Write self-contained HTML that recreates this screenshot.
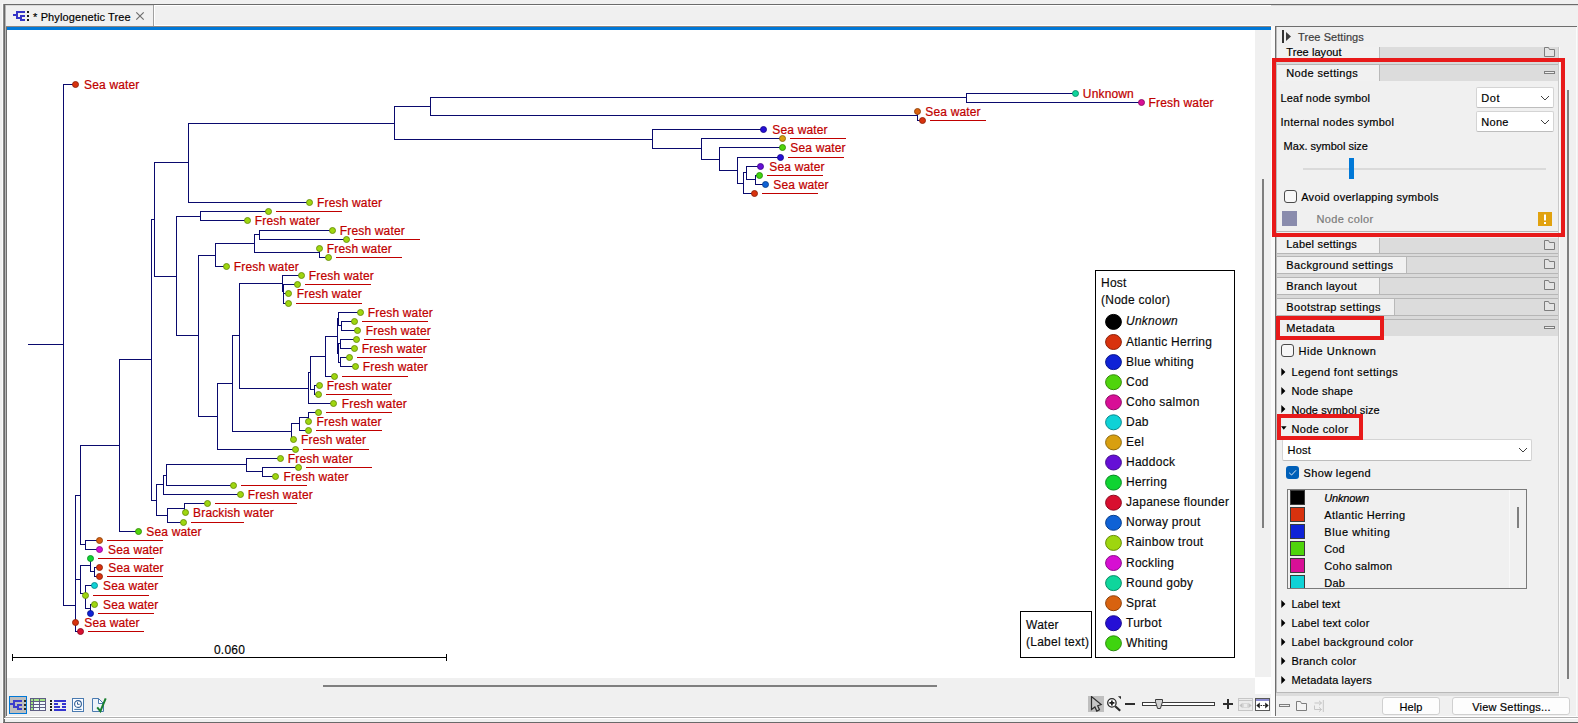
<!DOCTYPE html>
<html lang="en">
<head>
<meta charset="utf-8">
<title>Phylogenetic Tree</title>
<style>
html,body{margin:0;padding:0;}
body{width:1578px;height:723px;overflow:hidden;background:#f0f0f0;position:relative;font-family:'Liberation Sans', sans-serif;}
div,span,svg{position:absolute;box-sizing:border-box;}
.t{white-space:nowrap;display:block;-webkit-text-stroke:0.18px currentColor;}
.hdr{background:#dcdcdc;}
.combo{background:#fff;border:1px solid #d4d4d4;border-bottom-color:#bdbdbd;border-radius:2px;}
.btn{background:#fdfdfd;border:1px solid #d0d0d0;border-radius:3px;}
.cb{background:#f7f7f7;border:1px solid #4a4a4a;border-radius:3px;}
</style>
</head>
<body>

<div style="left:3px;top:4px;width:1575px;height:1px;background:#6b6b6b;"></div>
<div style="left:5px;top:5px;width:1573px;height:1px;background:#d9d9d9;"></div>
<div style="left:2px;top:3px;width:1px;height:720px;background:#fafafa;"></div>
<div style="left:3px;top:4px;width:1px;height:719px;background:#8c8c8c;"></div>
<div style="left:4px;top:4px;width:1px;height:719px;background:#696969;"></div>
<div style="left:5px;top:5px;width:1px;height:712px;background:#b4b4b4;"></div>
<div style="left:6px;top:26px;width:1px;height:690px;background:#6e6e6e;"></div>
<div style="left:6px;top:6px;width:147px;height:20px;background:#f0f0f0;"></div>
<div style="left:153px;top:5px;width:1px;height:21px;background:#a0a0a0;"></div>
<div style="left:154px;top:5px;width:1117px;height:1px;background:#ffffff;"></div>
<div style="left:154px;top:5px;width:1px;height:21px;background:#ffffff;"></div>
<div style="left:154px;top:25px;width:1117px;height:1px;background:#ffffff;"></div>
<div style="left:6px;top:26px;width:1265px;height:1px;background:#8c8682;"></div>
<div style="left:7px;top:27px;width:1264px;height:3px;background:#0078d7;"></div>
<svg style="left:13px;top:11px" width="17" height="11" viewBox="0 0 17 11" shape-rendering="crispEdges"><g fill="#3434c6"><rect x="0" y="3" width="4" height="2"/><rect x="3" y="0" width="2" height="8"/><rect x="3" y="0" width="9" height="2"/><rect x="3" y="6" width="6" height="2"/><rect x="7" y="4" width="2" height="6"/><rect x="7" y="4" width="5" height="2"/><rect x="7" y="8" width="5" height="2"/></g><g fill="#1a1a1a"><rect x="14" y="0" width="2" height="2"/><rect x="14" y="4" width="2" height="2"/><rect x="14" y="8" width="2" height="2"/></g></svg>
<span class="t" style="left:33.1px;top:9.69px;font-size:11px;line-height:14px;color:#000;letter-spacing:0.117px;">* Phylogenetic Tree</span>
<svg style="left:135px;top:11px" width="10" height="10" viewBox="0 0 10 10"><path d="M1.3 1.3L8.7 8.7M8.7 1.3L1.3 8.7" stroke="#6e6e6e" stroke-width="1.2" fill="none"/></svg>
<div style="left:7px;top:30px;width:1248px;height:648px;background:#ffffff;"></div>
<div style="left:1271px;top:26px;width:4px;height:690px;background:#fbfbfb;"></div>
<div style="left:1255px;top:30px;width:16px;height:647px;background:#f0f0f0;"></div>
<div style="left:1262px;top:179px;width:2px;height:349px;background:#7f7f7f;"></div>
<div style="left:1254px;top:677px;width:17px;height:17px;background:#ffffff;"></div>
<div style="left:7px;top:678px;width:1248px;height:16px;background:#f0f0f0;"></div>
<div style="left:323px;top:685px;width:614px;height:2px;background:#7f7f7f;"></div>
<svg style="left:0;top:0" width="1260" height="680" viewBox="0 0 1260 680">
<path d="M28 344.5H64M63 84.5H76M63 605.5H76M75 631.5H81M75 495.5H81M80 544.5H86M85 540.5H100M85 549.5H100M75 579.5H81M80 565.5H91M90 571.5H95M94 567.5H100M94 576.5H100M80 593.5H86M85 585.5H95M85 608.5H91M90 604.5H95M80 445.5H120M119 531.5H139M119 359.5H152M151 219.5H155M154 162.5H189M188 202.5H310M188 123.5H395M394 106.5H431M430 97.5H967M966 93.5H1076M966 102.5H1142M430 115.5H918M917 120.5H923M394 139.5H653M652 129.5H764M652 148.5H702M701 138.5H783M701 159.5H720M719 147.5H783M719 170.5H738M737 157.5H781M737 183.5H744M743 193.5H755M743 172.5H747M746 166.5H761M746 179.5H756M755 175.5H760M755 184.5H766M154 276.5H177M176 216.5H201M200 211.5H269M200 220.5H248M176 335.5H199M198 255.5H216M215 266.5H227M215 243.5H255M254 234.5H260M259 230.5H333M259 239.5H347M254 252.5H320M319 257.5H329M198 416.5H218M217 449.5H296M217 383.5H233M232 335.5H240M239 283.5H283M282 275.5H302M282 284.5H298M283 293.5H289M283 303.5H289M239 388.5H309M308 403.5H334M308 372.5H311M310 389.5H315M314 385.5H320M314 394.5H319M310 356.5H326M325 376.5H335M325 336.5H338M338 312.5H361M338 325.5H342M341 321.5H355M341 330.5H358M338 343.5H341M340 339.5H357M340 348.5H355M338 362.5H341M340 357.5H350M340 366.5H356M232 431.5H292M291 439.5H294M291 423.5H300M299 430.5H309M299 417.5H309M308 412.5H319M151 500.5H157M156 484.5H164M163 494.5H241M163 475.5H167M166 485.5H234M166 464.5H247M246 458.5H281M246 471.5H263M262 467.5H299M262 476.5H276M156 515.5H168M167 522.5H184M167 508.5H185M184 503.5H208M63.5 84V606M75.5 495V632M80.5 445V545M85.5 540V550M80.5 565V594M90.5 558V572M94.5 567V577M85.5 585V609M90.5 604V614M119.5 359V532M151.5 219V501M154.5 162V277M188.5 123V203M394.5 106V140M430.5 97V116M966.5 93V103M917.5 111V121M652.5 129V149M701.5 138V160M719.5 147V171M737.5 157V184M743.5 172V194M746.5 166V180M755.5 175V185M176.5 216V336M200.5 211V221M198.5 255V417M215.5 243V267M254.5 234V253M259.5 230V240M319.5 248V258M217.5 383V450M232.5 335V432M239.5 283V389M282.5 275V292M283.5 284V304M308.5 372V404M310.5 356V390M314.5 385V395M325.5 336V377M337.5 318V354M338.5 312V326M338.5 343V363M341.5 321V331M340.5 339V349M340.5 357V367M291.5 423V440M299.5 417V431M308.5 412V422M156.5 484V516M163.5 475V495M166.5 464V486M246.5 458V472M262.5 467V477M167.5 508V523M184.5 503V513" stroke="#0a0a6e" stroke-width="1" fill="none" shape-rendering="crispEdges"/>
<path d="M930 120.5h56M790 138.5h56M788 157.5h56M767 175.5h56M762 193.5h56M276 211.5h66M354 239.5h66M336 257.5h66M305 284.5h66M296 303.5h66M362 321.5h66M364 339.5h66M357 357.5h66M342 376.5h66M326 394.5h66M326 412.5h66M316 430.5h66M303 449.5h66M306 467.5h66M241 485.5h66M215 503.5h82M191 522.5h53M107 540.5h56M98 558.5h56M107 576.5h56M93 595.5h56M98 613.5h56M88 631.5h56" stroke="#c00000" stroke-width="1" fill="none" shape-rendering="crispEdges"/>
<circle cx="75.5" cy="84.5" r="3.0" fill="#d8320e" stroke="#8e2109" stroke-width="0.9"/>
<circle cx="1075.5" cy="93.5" r="3.0" fill="#0fd69c" stroke="#098d66" stroke-width="0.9"/>
<circle cx="1141.5" cy="102.5" r="3.0" fill="#d80f96" stroke="#8e0963" stroke-width="0.9"/>
<circle cx="917.5" cy="111.5" r="3.0" fill="#d8620f" stroke="#8e4009" stroke-width="0.9"/>
<circle cx="922.5" cy="120.5" r="3.0" fill="#d8320e" stroke="#8e2109" stroke-width="0.9"/>
<circle cx="763.5" cy="129.5" r="3.0" fill="#250fd6" stroke="#18098d" stroke-width="0.9"/>
<circle cx="782.5" cy="138.5" r="3.0" fill="#d89f0f" stroke="#8e6809" stroke-width="0.9"/>
<circle cx="782.5" cy="147.5" r="3.0" fill="#4fd40c" stroke="#348b07" stroke-width="0.9"/>
<circle cx="780.5" cy="157.5" r="3.0" fill="#250fd6" stroke="#18098d" stroke-width="0.9"/>
<circle cx="760.5" cy="166.5" r="3.0" fill="#650fd6" stroke="#42098d" stroke-width="0.9"/>
<circle cx="759.5" cy="175.5" r="3.0" fill="#3fd40f" stroke="#298b09" stroke-width="0.9"/>
<circle cx="765.5" cy="184.5" r="3.0" fill="#0f62d6" stroke="#09408d" stroke-width="0.9"/>
<circle cx="754.5" cy="193.5" r="3.0" fill="#d8320e" stroke="#8e2109" stroke-width="0.9"/>
<circle cx="309.5" cy="202.5" r="3.0" fill="#9ed60f" stroke="#688d09" stroke-width="0.9"/>
<circle cx="268.5" cy="211.5" r="3.0" fill="#9ed60f" stroke="#688d09" stroke-width="0.9"/>
<circle cx="247.5" cy="220.5" r="3.0" fill="#9ed60f" stroke="#688d09" stroke-width="0.9"/>
<circle cx="332.5" cy="230.5" r="3.0" fill="#9ed60f" stroke="#688d09" stroke-width="0.9"/>
<circle cx="346.5" cy="239.5" r="3.0" fill="#9ed60f" stroke="#688d09" stroke-width="0.9"/>
<circle cx="319.5" cy="248.5" r="3.0" fill="#9ed60f" stroke="#688d09" stroke-width="0.9"/>
<circle cx="328.5" cy="257.5" r="3.0" fill="#9ed60f" stroke="#688d09" stroke-width="0.9"/>
<circle cx="226.5" cy="266.5" r="3.0" fill="#9ed60f" stroke="#688d09" stroke-width="0.9"/>
<circle cx="301.5" cy="275.5" r="3.0" fill="#9ed60f" stroke="#688d09" stroke-width="0.9"/>
<circle cx="297.5" cy="284.5" r="3.0" fill="#9ed60f" stroke="#688d09" stroke-width="0.9"/>
<circle cx="288.5" cy="293.5" r="3.0" fill="#9ed60f" stroke="#688d09" stroke-width="0.9"/>
<circle cx="288.5" cy="303.5" r="3.0" fill="#9ed60f" stroke="#688d09" stroke-width="0.9"/>
<circle cx="360.5" cy="312.5" r="3.0" fill="#9ed60f" stroke="#688d09" stroke-width="0.9"/>
<circle cx="354.5" cy="321.5" r="3.0" fill="#9ed60f" stroke="#688d09" stroke-width="0.9"/>
<circle cx="357.5" cy="330.5" r="3.0" fill="#9ed60f" stroke="#688d09" stroke-width="0.9"/>
<circle cx="356.5" cy="339.5" r="3.0" fill="#9ed60f" stroke="#688d09" stroke-width="0.9"/>
<circle cx="354.5" cy="348.5" r="3.0" fill="#9ed60f" stroke="#688d09" stroke-width="0.9"/>
<circle cx="349.5" cy="357.5" r="3.0" fill="#9ed60f" stroke="#688d09" stroke-width="0.9"/>
<circle cx="355.5" cy="366.5" r="3.0" fill="#9ed60f" stroke="#688d09" stroke-width="0.9"/>
<circle cx="334.5" cy="376.5" r="3.0" fill="#9ed60f" stroke="#688d09" stroke-width="0.9"/>
<circle cx="319.5" cy="385.5" r="3.0" fill="#9ed60f" stroke="#688d09" stroke-width="0.9"/>
<circle cx="318.5" cy="394.5" r="3.0" fill="#9ed60f" stroke="#688d09" stroke-width="0.9"/>
<circle cx="333.5" cy="403.5" r="3.0" fill="#9ed60f" stroke="#688d09" stroke-width="0.9"/>
<circle cx="318.5" cy="412.5" r="3.0" fill="#9ed60f" stroke="#688d09" stroke-width="0.9"/>
<circle cx="308.5" cy="421.5" r="3.0" fill="#9ed60f" stroke="#688d09" stroke-width="0.9"/>
<circle cx="308.5" cy="430.5" r="3.0" fill="#9ed60f" stroke="#688d09" stroke-width="0.9"/>
<circle cx="293.5" cy="439.5" r="3.0" fill="#9ed60f" stroke="#688d09" stroke-width="0.9"/>
<circle cx="295.5" cy="449.5" r="3.0" fill="#9ed60f" stroke="#688d09" stroke-width="0.9"/>
<circle cx="280.5" cy="458.5" r="3.0" fill="#9ed60f" stroke="#688d09" stroke-width="0.9"/>
<circle cx="298.5" cy="467.5" r="3.0" fill="#9ed60f" stroke="#688d09" stroke-width="0.9"/>
<circle cx="275.5" cy="476.5" r="3.0" fill="#9ed60f" stroke="#688d09" stroke-width="0.9"/>
<circle cx="233.5" cy="485.5" r="3.0" fill="#9ed60f" stroke="#688d09" stroke-width="0.9"/>
<circle cx="240.5" cy="494.5" r="3.0" fill="#9ed60f" stroke="#688d09" stroke-width="0.9"/>
<circle cx="207.5" cy="503.5" r="3.0" fill="#9ed60f" stroke="#688d09" stroke-width="0.9"/>
<circle cx="185.5" cy="512.5" r="3.0" fill="#9ed60f" stroke="#688d09" stroke-width="0.9"/>
<circle cx="183.5" cy="522.5" r="3.0" fill="#9ed60f" stroke="#688d09" stroke-width="0.9"/>
<circle cx="138.5" cy="531.5" r="3.0" fill="#4fd40c" stroke="#348b07" stroke-width="0.9"/>
<circle cx="99.5" cy="540.5" r="3.0" fill="#d8620f" stroke="#8e4009" stroke-width="0.9"/>
<circle cx="99.5" cy="549.5" r="3.0" fill="#d60fd2" stroke="#8d098a" stroke-width="0.9"/>
<circle cx="90.5" cy="558.5" r="3.0" fill="#0fd432" stroke="#098b21" stroke-width="0.9"/>
<circle cx="99.5" cy="567.5" r="3.0" fill="#d8320e" stroke="#8e2109" stroke-width="0.9"/>
<circle cx="99.5" cy="576.5" r="3.0" fill="#d8320e" stroke="#8e2109" stroke-width="0.9"/>
<circle cx="94.5" cy="585.5" r="3.0" fill="#0fd2d6" stroke="#098a8d" stroke-width="0.9"/>
<circle cx="85.5" cy="595.5" r="3.0" fill="#9ed60f" stroke="#688d09" stroke-width="0.9"/>
<circle cx="94.5" cy="604.5" r="3.0" fill="#9ed60f" stroke="#688d09" stroke-width="0.9"/>
<circle cx="90.5" cy="613.5" r="3.0" fill="#0f22d6" stroke="#09168d" stroke-width="0.9"/>
<circle cx="75.5" cy="622.5" r="3.0" fill="#d8320e" stroke="#8e2109" stroke-width="0.9"/>
<circle cx="80.5" cy="631.5" r="3.0" fill="#d80f2f" stroke="#8e091f" stroke-width="0.9"/>
<g font-family="'Liberation Sans', sans-serif" font-size="12" letter-spacing="0.15" fill="#c00000" stroke="#c00000" stroke-width="0.22">
<text x="84.10" y="88.9">Sea water</text>
<text x="1082.85" y="97.9">Unknown</text>
<text x="1148.60" y="106.9">Fresh water</text>
<text x="925.35" y="115.9">Sea water</text>
<text x="772.35" y="133.9">Sea water</text>
<text x="790.35" y="151.9">Sea water</text>
<text x="769.35" y="170.9">Sea water</text>
<text x="773.35" y="188.9">Sea water</text>
<text x="317.10" y="206.9">Fresh water</text>
<text x="254.85" y="224.9">Fresh water</text>
<text x="339.85" y="234.9">Fresh water</text>
<text x="326.85" y="252.9">Fresh water</text>
<text x="233.85" y="270.9">Fresh water</text>
<text x="308.85" y="279.9">Fresh water</text>
<text x="296.85" y="297.9">Fresh water</text>
<text x="367.85" y="316.9">Fresh water</text>
<text x="365.85" y="334.9">Fresh water</text>
<text x="361.85" y="352.9">Fresh water</text>
<text x="362.85" y="370.9">Fresh water</text>
<text x="326.85" y="389.9">Fresh water</text>
<text x="341.85" y="407.9">Fresh water</text>
<text x="316.60" y="425.9">Fresh water</text>
<text x="301.10" y="443.9">Fresh water</text>
<text x="287.85" y="462.9">Fresh water</text>
<text x="283.60" y="480.9">Fresh water</text>
<text x="247.85" y="498.9">Fresh water</text>
<text x="193.10" y="516.9">Brackish water</text>
<text x="146.35" y="535.9">Sea water</text>
<text x="108.10" y="553.9">Sea water</text>
<text x="108.35" y="571.9">Sea water</text>
<text x="103.10" y="589.9">Sea water</text>
<text x="103.10" y="608.9">Sea water</text>
<text x="84.35" y="626.9">Sea water</text>
</g>
<path d="M12 657.5H447M12.5 654V661M446.5 654V661" stroke="#000" stroke-width="1" fill="none" shape-rendering="crispEdges"/>
<text x="229.5" y="653.7" text-anchor="middle" font-family="'Liberation Sans', sans-serif" font-size="12" letter-spacing="0.2" fill="#000" stroke="#000" stroke-width="0.15">0.060</text>
<rect x="1095.5" y="270.5" width="139" height="387" fill="#fff" stroke="#000" stroke-width="1" shape-rendering="crispEdges"/>
<rect x="1020.5" y="611.5" width="71" height="46" fill="#fff" stroke="#000" stroke-width="1" shape-rendering="crispEdges"/>
<g font-family="'Liberation Sans', sans-serif" font-size="12" letter-spacing="0.26" fill="#0a0a0a" stroke="#0a0a0a" stroke-width="0.15">
<text x="1101" y="287.2">Host</text><text x="1101" y="304.3">(Node color)</text>
<text x="1026" y="629.2">Water</text><text x="1026" y="646.3">(Label text)</text>
<ellipse cx="1113.5" cy="321.9" rx="7.9" ry="7.5" fill="#000000" stroke="#000000" stroke-width="1"/>
<text x="1126" y="324.9" font-style="italic">Unknown</text>
<ellipse cx="1113.5" cy="342.0" rx="7.9" ry="7.5" fill="#d8320e" stroke="#8e2109" stroke-width="1"/>
<text x="1126" y="345.9">Atlantic Herring</text>
<ellipse cx="1113.5" cy="362.1" rx="7.9" ry="7.5" fill="#0f22d6" stroke="#09168d" stroke-width="1"/>
<text x="1126" y="366.0">Blue whiting</text>
<ellipse cx="1113.5" cy="382.2" rx="7.9" ry="7.5" fill="#4fd40c" stroke="#348b07" stroke-width="1"/>
<text x="1126" y="386.1">Cod</text>
<ellipse cx="1113.5" cy="402.3" rx="7.9" ry="7.5" fill="#d80f96" stroke="#8e0963" stroke-width="1"/>
<text x="1126" y="406.2">Coho salmon</text>
<ellipse cx="1113.5" cy="422.3" rx="7.9" ry="7.5" fill="#0fd2d6" stroke="#098a8d" stroke-width="1"/>
<text x="1126" y="426.2">Dab</text>
<ellipse cx="1113.5" cy="442.4" rx="7.9" ry="7.5" fill="#d89f0f" stroke="#8e6809" stroke-width="1"/>
<text x="1126" y="446.3">Eel</text>
<ellipse cx="1113.5" cy="462.5" rx="7.9" ry="7.5" fill="#650fd6" stroke="#42098d" stroke-width="1"/>
<text x="1126" y="466.4">Haddock</text>
<ellipse cx="1113.5" cy="482.6" rx="7.9" ry="7.5" fill="#0fd432" stroke="#098b21" stroke-width="1"/>
<text x="1126" y="485.6">Herring</text>
<ellipse cx="1113.5" cy="502.7" rx="7.9" ry="7.5" fill="#d80f2f" stroke="#8e091f" stroke-width="1"/>
<text x="1126" y="505.7">Japanese flounder</text>
<ellipse cx="1113.5" cy="522.8" rx="7.9" ry="7.5" fill="#0f62d6" stroke="#09408d" stroke-width="1"/>
<text x="1126" y="525.8">Norway prout</text>
<ellipse cx="1113.5" cy="542.9" rx="7.9" ry="7.5" fill="#9ed60f" stroke="#688d09" stroke-width="1"/>
<text x="1126" y="545.9">Rainbow trout</text>
<ellipse cx="1113.5" cy="563.0" rx="7.9" ry="7.5" fill="#d60fd2" stroke="#8d098a" stroke-width="1"/>
<text x="1126" y="566.9">Rockling</text>
<ellipse cx="1113.5" cy="583.1" rx="7.9" ry="7.5" fill="#0fd69c" stroke="#098d66" stroke-width="1"/>
<text x="1126" y="587.0">Round goby</text>
<ellipse cx="1113.5" cy="603.2" rx="7.9" ry="7.5" fill="#d8620f" stroke="#8e4009" stroke-width="1"/>
<text x="1126" y="607.1">Sprat</text>
<ellipse cx="1113.5" cy="623.2" rx="7.9" ry="7.5" fill="#250fd6" stroke="#18098d" stroke-width="1"/>
<text x="1126" y="627.1">Turbot</text>
<ellipse cx="1113.5" cy="643.3" rx="7.9" ry="7.5" fill="#3fd40f" stroke="#298b09" stroke-width="1"/>
<text x="1126" y="647.2">Whiting</text>
</g>
</svg>
<div style="left:9px;top:696px;width:18px;height:18px;background:#bebebe;border:1px solid #0078d7;"></div>
<svg style="left:10px;top:699px" width="17" height="12" viewBox="0 0 17 12" shape-rendering="crispEdges"><g fill="#3c3ccc"><rect x="0" y="4" width="4" height="1.6"/><rect x="3" y="1" width="2" height="7"/><rect x="3" y="1" width="9" height="2"/><rect x="3" y="7" width="6" height="1.6"/><rect x="7.4" y="5" width="1.6" height="6"/><rect x="7.4" y="5" width="4.6" height="2"/><rect x="7.4" y="9" width="4.6" height="2"/></g><g fill="#2a2622"><rect x="14" y="1" width="2" height="2"/><rect x="14" y="5" width="2" height="2"/><rect x="14" y="9" width="2" height="2"/></g></svg>
<svg style="left:30px;top:698px" width="16" height="13" viewBox="0 0 16 13" shape-rendering="crispEdges"><rect x="0" y="0" width="16" height="13" fill="#5e5e84"/><g fill="#a4e486"><rect x="1" y="1" width="2" height="2"/><rect x="4" y="1" width="5" height="2"/><rect x="10" y="1" width="5" height="2"/><rect x="1" y="4" width="2" height="2"/><rect x="1" y="7" width="2" height="2"/><rect x="1" y="10" width="2" height="2"/></g><g fill="#f2faff"><rect x="4" y="4" width="5" height="2"/><rect x="10" y="4" width="5" height="2"/><rect x="4" y="7" width="5" height="2"/><rect x="10" y="7" width="5" height="2"/><rect x="4" y="10" width="5" height="2"/><rect x="10" y="10" width="5" height="2"/></g></svg>
<svg style="left:50px;top:700px" width="16" height="11" viewBox="0 0 16 11" shape-rendering="crispEdges"><g fill="#1a1a1a"><rect x="0" y="0" width="2" height="2"/><rect x="0" y="3" width="2" height="2"/><rect x="0" y="6" width="2" height="2"/><rect x="0" y="9" width="2" height="2"/></g><g fill="#3434d0"><rect x="4" y="0" width="12" height="2"/><rect x="4" y="3" width="4" height="2"/><rect x="12" y="3" width="4" height="2"/><rect x="4" y="6" width="6" height="2"/><rect x="12" y="6" width="4" height="2"/><rect x="4" y="9" width="12" height="2"/></g></svg>
<svg style="left:72px;top:698px" width="12" height="14" viewBox="0 0 12 14"><rect x="0.5" y="0.5" width="11" height="13" fill="#f8fbff" stroke="#4a7ab0"/><circle cx="6" cy="6" r="3.4" fill="#fff" stroke="#2e5c94" stroke-width="1.1"/><path d="M5.5 4.2V6.3H7.7" stroke="#2e5c94" stroke-width="1" fill="none"/><path d="M2.3 11.4H9.7" stroke="#3b70a8" stroke-width="1" fill="none"/></svg>
<svg style="left:92px;top:697px" width="15" height="16" viewBox="0 0 15 16"><path d="M0.5 1.5H6.5L11.5 6.5V14.5H0.5Z" fill="#eef3fa" stroke="#4a7ab0"/><path d="M6.5 1.5V6.5H11.5Z" fill="#fff" stroke="#4a7ab0"/><path d="M5.2 10.4L8.4 14.2L13.7 1.3" stroke="#1a8030" stroke-width="2" fill="none"/></svg>
<div style="left:1088px;top:696px;width:16px;height:16px;background:#bfbfbf;"></div>
<svg style="left:1090px;top:696px" width="13" height="16" viewBox="0 0 13 16"><path d="M1.5 0.6V13.5L4.9 11L6.8 15.1L9.5 13.8L7.7 9.8L11.2 8.6Z" fill="#c6c6c6" stroke="#2c2c2c" stroke-width="1.2" stroke-linejoin="miter"/></svg>
<svg style="left:1106px;top:695px" width="16" height="18" viewBox="0 0 16 18"><circle cx="5.9" cy="7.9" r="4.2" fill="#fff" stroke="#2a2a2a" stroke-width="1.3"/><path d="M3.4 7.9H8.4M5.9 5.4V10.4" stroke="#1e1e1e" stroke-width="1.7"/><path d="M9.2 11.2L14.2 15.8" stroke="#2a2a2a" stroke-width="2.2"/><path d="M11.9 1.2H15V4.3Z" fill="#2a2a2a"/></svg>
<div style="left:1125px;top:703px;width:10px;height:2px;background:#2e2e2e;"></div>
<div style="left:1142px;top:702px;width:73px;height:4px;background:#ffffff;border:1px solid #3c3c3c;"></div>
<svg style="left:1155px;top:699px" width="8" height="10" viewBox="0 0 8 10"><path d="M0.5 0.5H7.5V2.8L5.4 9.5H2.6L0.5 2.8Z" fill="#d2d2d2" stroke="#3a3a3a"/></svg>
<div style="left:1223px;top:703px;width:10px;height:2px;background:#2e2e2e;"></div>
<div style="left:1227px;top:699px;width:2px;height:10px;background:#2e2e2e;"></div>
<svg style="left:1238px;top:698px" width="15" height="13" viewBox="0 0 15 13"><rect x="0.5" y="0.5" width="14" height="12" fill="#ececec" stroke="#c6c6c6"/><path d="M0 2.5H15" stroke="#c6c6c6"/><path d="M1.3 7.5L4.6 4.8V10.2ZM13.7 7.5L10.4 4.8V10.2Z" fill="#c2c2c2"/><rect x="5.5" y="5.5" width="4" height="4" fill="none" stroke="#c6c6c6" stroke-dasharray="1 1"/></svg>
<svg style="left:1255px;top:698px" width="15" height="13" viewBox="0 0 15 13"><rect x="0.5" y="0.5" width="14" height="12" fill="#fff" stroke="#5a5a5a"/><rect x="1" y="1" width="13" height="2" fill="#8c8cd0"/><path d="M1.3 7.5L4.8 4.6V10.4ZM13.7 7.5L10.2 4.6V10.4Z" fill="#1e1e1e"/><path d="M5.5 7.5H10" stroke="#1e1e1e" stroke-width="1.2" stroke-dasharray="1.6 1"/></svg>
<div style="left:6px;top:716px;width:1572px;height:1px;background:#ffffff;"></div>
<div style="left:5px;top:717px;width:1573px;height:1px;background:#b0b0b0;"></div>
<div style="left:4px;top:718px;width:1574px;height:1px;background:#ffffff;"></div>
<div style="left:3px;top:722px;width:1575px;height:1px;background:#696969;"></div>
<div style="left:1275px;top:26px;width:302px;height:1px;background:#6e6e6e;"></div>
<div style="left:1275px;top:26px;width:1px;height:690px;background:#6e6e6e;"></div>
<div style="left:1576px;top:27px;width:1px;height:690px;background:#fbfbfb;"></div>
<div style="left:1276px;top:27px;width:1px;height:665px;background:#bcbcbc;"></div>
<div style="left:1558px;top:47px;width:1px;height:646px;background:#c9c9c9;"></div>
<div style="left:1559px;top:47px;width:1px;height:649px;background:#fafafa;"></div>
<div style="left:1276px;top:692px;width:283px;height:1px;background:#b8b8b8;"></div>
<div style="left:1276px;top:693px;width:283px;height:3px;background:#dcdcdc;"></div>
<div style="left:1567px;top:90px;width:2px;height:589px;background:#7f7f7f;"></div>
<svg style="left:1281px;top:30px" width="12" height="13" viewBox="0 0 12 13"><rect x="1" y="0" width="2" height="13" fill="#333"/><path d="M5 2L10 6.5L5 11Z" fill="#3c3c3c"/></svg>
<span class="t" style="left:1298.1px;top:30.39px;font-size:11px;line-height:14px;color:#3c3c3c;letter-spacing:0.057px;">Tree Settings</span>
<div style="left:1277px;top:47px;width:102px;height:11px;background:#f1f1f1;"></div>
<div style="left:1379px;top:47px;width:179px;height:11px;background:#dcdcdc;border-left:1px solid #b9b9b9;"></div>
<span class="t" style="left:1286.3px;top:44.99px;font-size:11px;line-height:14px;color:#000;letter-spacing:0.068px;">Tree layout</span>
<svg style="left:1544px;top:46.5px" width="12" height="11" viewBox="0 0 12 11"><path d="M0.5 9.5V0.5H4.5L5.5 2.5H10.5V9.5Z" fill="#e4e4e4" stroke="#7d7d7d" stroke-width="1"/></svg>
<div style="left:1277px;top:58px;width:281px;height:7px;background:#d9d9d9;"></div>
<div style="left:1277px;top:58px;width:281px;height:1px;background:#b6b6b6;"></div>
<div style="left:1277px;top:64px;width:281px;height:1px;background:#b6b6b6;"></div>
<div style="left:1277px;top:65px;width:102px;height:16px;background:#f1f1f1;"></div>
<div style="left:1379px;top:65px;width:179px;height:16px;background:#dcdcdc;border-left:1px solid #b9b9b9;"></div>
<span class="t" style="left:1286.3px;top:66.09px;font-size:11px;line-height:14px;color:#000;letter-spacing:0.353px;">Node settings</span>
<svg style="left:1544px;top:71px" width="12" height="4" viewBox="0 0 12 4"><rect x="0.5" y="0.5" width="10" height="2" fill="#ededed" stroke="#7d7d7d" stroke-width="1"/></svg>
<span class="t" style="left:1280.5px;top:90.99px;font-size:11px;line-height:14px;color:#000;letter-spacing:0.178px;">Leaf node symbol</span>
<div style="left:1476px;top:87px;width:78px;height:21px;" class="combo"></div>
<span class="t" style="left:1481.2px;top:90.99px;font-size:11px;line-height:14px;color:#000;letter-spacing:0.591px;">Dot</span>
<svg style="left:1540px;top:95px" width="10" height="6" viewBox="0 0 10 6"><path d="M1 1L5 5L9 1" stroke="#404040" stroke-width="1" fill="none"/></svg>
<span class="t" style="left:1280.5px;top:115.19px;font-size:11px;line-height:14px;color:#000;letter-spacing:0.289px;">Internal nodes symbol</span>
<div style="left:1476px;top:111px;width:78px;height:21px;" class="combo"></div>
<span class="t" style="left:1481.2px;top:115.19px;font-size:11px;line-height:14px;color:#000;letter-spacing:0.334px;">None</span>
<svg style="left:1540px;top:119px" width="10" height="6" viewBox="0 0 10 6"><path d="M1 1L5 5L9 1" stroke="#404040" stroke-width="1" fill="none"/></svg>
<span class="t" style="left:1283.6px;top:139.39px;font-size:11px;line-height:14px;color:#000;letter-spacing:0.003px;">Max. symbol size</span>
<div style="left:1303px;top:168px;width:243px;height:2px;background:#dadada;"></div>
<div style="left:1349px;top:158px;width:5px;height:21px;background:#0078d7;"></div>
<div style="left:1284px;top:190px;width:13px;height:13px;" class="cb"></div>
<span class="t" style="left:1301.2px;top:189.89px;font-size:11px;line-height:14px;color:#000;letter-spacing:0.281px;">Avoid overlapping symbols</span>
<div style="left:1282px;top:211px;width:15px;height:15px;background:#8a8cad;"></div>
<span class="t" style="left:1316.4px;top:211.69px;font-size:11px;line-height:14px;color:#7a7a7a;letter-spacing:0.400px;">Node color</span>
<svg style="left:1538px;top:212px" width="14" height="14" viewBox="0 0 14 14"><rect width="14" height="14" fill="#e1a20f"/><rect x="6" y="2.5" width="2" height="6" fill="#fff"/><rect x="6" y="10" width="2" height="2" fill="#fff"/></svg>
<div style="left:1277px;top:231px;width:281px;height:1px;background:#b6b6b6;"></div>
<div style="left:1277px;top:238px;width:102px;height:15px;background:#f1f1f1;"></div>
<div style="left:1379px;top:238px;width:179px;height:15px;background:#dcdcdc;border-left:1px solid #b9b9b9;"></div>
<span class="t" style="left:1286.3px;top:237.19px;font-size:11px;line-height:14px;color:#000;letter-spacing:0.194px;">Label settings</span>
<svg style="left:1544px;top:239.5px" width="12" height="11" viewBox="0 0 12 11"><path d="M0.5 9.5V0.5H4.5L5.5 2.5H10.5V9.5Z" fill="#e4e4e4" stroke="#7d7d7d" stroke-width="1"/></svg>
<div style="left:1277px;top:253px;width:281px;height:4px;background:#d9d9d9;"></div>
<div style="left:1277px;top:253px;width:281px;height:1px;background:#b6b6b6;"></div>
<div style="left:1277px;top:256px;width:281px;height:1px;background:#b6b6b6;"></div>
<div style="left:1277px;top:257px;width:129px;height:16px;background:#f1f1f1;"></div>
<div style="left:1406px;top:257px;width:152px;height:16px;background:#dcdcdc;border-left:1px solid #b9b9b9;"></div>
<span class="t" style="left:1286.3px;top:257.99px;font-size:11px;line-height:14px;color:#000;letter-spacing:0.385px;">Background settings</span>
<svg style="left:1544px;top:259px" width="12" height="11" viewBox="0 0 12 11"><path d="M0.5 9.5V0.5H4.5L5.5 2.5H10.5V9.5Z" fill="#e4e4e4" stroke="#7d7d7d" stroke-width="1"/></svg>
<div style="left:1277px;top:273px;width:281px;height:5px;background:#d9d9d9;"></div>
<div style="left:1277px;top:273px;width:281px;height:1px;background:#b6b6b6;"></div>
<div style="left:1277px;top:277px;width:281px;height:1px;background:#b6b6b6;"></div>
<div style="left:1277px;top:278px;width:102px;height:16px;background:#f1f1f1;"></div>
<div style="left:1379px;top:278px;width:179px;height:16px;background:#dcdcdc;border-left:1px solid #b9b9b9;"></div>
<span class="t" style="left:1286.3px;top:278.89px;font-size:11px;line-height:14px;color:#000;letter-spacing:0.261px;">Branch layout</span>
<svg style="left:1544px;top:280px" width="12" height="11" viewBox="0 0 12 11"><path d="M0.5 9.5V0.5H4.5L5.5 2.5H10.5V9.5Z" fill="#e4e4e4" stroke="#7d7d7d" stroke-width="1"/></svg>
<div style="left:1277px;top:294px;width:281px;height:5px;background:#d9d9d9;"></div>
<div style="left:1277px;top:294px;width:281px;height:1px;background:#b6b6b6;"></div>
<div style="left:1277px;top:298px;width:281px;height:1px;background:#b6b6b6;"></div>
<div style="left:1277px;top:299px;width:117px;height:16px;background:#f1f1f1;"></div>
<div style="left:1394px;top:299px;width:164px;height:16px;background:#dcdcdc;border-left:1px solid #b9b9b9;"></div>
<span class="t" style="left:1286.3px;top:300.19px;font-size:11px;line-height:14px;color:#000;letter-spacing:0.368px;">Bootstrap settings</span>
<svg style="left:1544px;top:301px" width="12" height="11" viewBox="0 0 12 11"><path d="M0.5 9.5V0.5H4.5L5.5 2.5H10.5V9.5Z" fill="#e4e4e4" stroke="#7d7d7d" stroke-width="1"/></svg>
<div style="left:1277px;top:315px;width:281px;height:5px;background:#d9d9d9;"></div>
<div style="left:1277px;top:315px;width:281px;height:1px;background:#b6b6b6;"></div>
<div style="left:1277px;top:319px;width:281px;height:1px;background:#b6b6b6;"></div>
<div style="left:1277px;top:320px;width:106px;height:16px;background:#f1f1f1;"></div>
<div style="left:1383px;top:320px;width:175px;height:16px;background:#dcdcdc;border-left:1px solid #b9b9b9;"></div>
<span class="t" style="left:1286.3px;top:321.19px;font-size:11px;line-height:14px;color:#000;letter-spacing:0.362px;">Metadata</span>
<svg style="left:1544px;top:326px" width="12" height="4" viewBox="0 0 12 4"><rect x="0.5" y="0.5" width="10" height="2" fill="#ededed" stroke="#7d7d7d" stroke-width="1"/></svg>
<div style="left:1281px;top:344px;width:13px;height:13px;" class="cb"></div>
<span class="t" style="left:1298.5px;top:343.99px;font-size:11px;line-height:14px;color:#000;letter-spacing:0.533px;">Hide Unknown</span>
<svg style="left:1281px;top:368px" width="5" height="8" viewBox="0 0 5 8"><path d="M0.3 0L4.4 4L0.3 8Z" fill="#000"/></svg>
<span class="t" style="left:1291.4px;top:365.19px;font-size:11px;line-height:14px;color:#000;letter-spacing:0.380px;">Legend font settings</span>
<svg style="left:1281px;top:386.7px" width="5" height="8" viewBox="0 0 5 8"><path d="M0.3 0L4.4 4L0.3 8Z" fill="#000"/></svg>
<span class="t" style="left:1291.4px;top:383.89px;font-size:11px;line-height:14px;color:#000;letter-spacing:0.231px;">Node shape</span>
<svg style="left:1281px;top:405.4px" width="5" height="8" viewBox="0 0 5 8"><path d="M0.3 0L4.4 4L0.3 8Z" fill="#000"/></svg>
<span class="t" style="left:1291.4px;top:402.59px;font-size:11px;line-height:14px;color:#000;letter-spacing:0.099px;">Node symbol size</span>
<svg style="left:1281px;top:426.2px" width="6" height="4" viewBox="0 0 6 4"><path d="M0 0.2H5.6L2.8 3.8Z" fill="#000"/></svg>
<span class="t" style="left:1291.4px;top:421.89px;font-size:11px;line-height:14px;color:#000;letter-spacing:0.389px;">Node color</span>
<div style="left:1282px;top:439px;width:250px;height:22px;" class="combo"></div>
<span class="t" style="left:1287.6px;top:442.99px;font-size:11px;line-height:14px;color:#000;letter-spacing:0.227px;">Host</span>
<svg style="left:1518px;top:447px" width="10" height="6" viewBox="0 0 10 6"><path d="M1 1L5 5L9 1" stroke="#404040" stroke-width="1" fill="none"/></svg>
<div style="left:1286px;top:466px;width:13px;height:13px;background:#005fb8;border-radius:3px;"></div>
<svg style="left:1286px;top:466px" width="13" height="13" viewBox="0 0 13 13"><path d="M3.2 6.8L5.6 9L10 4.3" stroke="#eef4fb" stroke-width="0.9" fill="none"/></svg>
<span class="t" style="left:1303.5px;top:465.99px;font-size:11px;line-height:14px;color:#000;letter-spacing:0.360px;">Show legend</span>
<div style="left:1287px;top:489px;width:240px;height:100px;background:#f0f0f0;border:1px solid #7a7a7a;"></div>
<div style="left:1509px;top:490px;width:1px;height:98px;background:#f8f8f8;"></div>
<div style="left:1517px;top:507px;width:2px;height:21px;background:#7f7f7f;"></div>
<div style="left:1290px;top:490px;width:15px;height:15px;background:#000000;border:1px solid #3a3a3a;"></div>
<span class="t" style="left:1324.3px;top:490.89px;font-size:11px;line-height:14px;color:#000;letter-spacing:-0.193px;font-style:italic;">Unknown</span>
<div style="left:1290px;top:507px;width:15px;height:15px;background:#d8320e;border:1px solid #3a3a3a;"></div>
<span class="t" style="left:1324.3px;top:508.09px;font-size:11px;line-height:14px;color:#000;letter-spacing:0.367px;">Atlantic Herring</span>
<div style="left:1290px;top:524px;width:15px;height:15px;background:#0f22d6;border:1px solid #3a3a3a;"></div>
<span class="t" style="left:1324.3px;top:525.19px;font-size:11px;line-height:14px;color:#000;letter-spacing:0.562px;">Blue whiting</span>
<div style="left:1290px;top:541px;width:15px;height:15px;background:#4fd40c;border:1px solid #3a3a3a;"></div>
<span class="t" style="left:1324.3px;top:541.99px;font-size:11px;line-height:14px;color:#000;letter-spacing:0.110px;">Cod</span>
<div style="left:1290px;top:558px;width:15px;height:15px;background:#d80f96;border:1px solid #3a3a3a;"></div>
<span class="t" style="left:1324.3px;top:559.29px;font-size:11px;line-height:14px;color:#000;letter-spacing:0.309px;">Coho salmon</span>
<div style="left:1290px;top:575px;width:15px;height:13px;background:#0fd2d6;border:1px solid #3a3a3a;border-bottom:none;"></div>
<span class="t" style="left:1324.3px;top:576.09px;font-size:11px;line-height:14px;color:#000;letter-spacing:0.210px;">Dab</span>
<svg style="left:1281px;top:599.8px" width="5" height="8" viewBox="0 0 5 8"><path d="M0.3 0L4.4 4L0.3 8Z" fill="#000"/></svg>
<span class="t" style="left:1291.4px;top:596.99px;font-size:11px;line-height:14px;color:#000;letter-spacing:0.100px;">Label text</span>
<svg style="left:1281px;top:618.8px" width="5" height="8" viewBox="0 0 5 8"><path d="M0.3 0L4.4 4L0.3 8Z" fill="#000"/></svg>
<span class="t" style="left:1291.4px;top:615.99px;font-size:11px;line-height:14px;color:#000;letter-spacing:0.220px;">Label text color</span>
<svg style="left:1281px;top:638px" width="5" height="8" viewBox="0 0 5 8"><path d="M0.3 0L4.4 4L0.3 8Z" fill="#000"/></svg>
<span class="t" style="left:1291.4px;top:635.19px;font-size:11px;line-height:14px;color:#000;letter-spacing:0.350px;">Label background color</span>
<svg style="left:1281px;top:656.9px" width="5" height="8" viewBox="0 0 5 8"><path d="M0.3 0L4.4 4L0.3 8Z" fill="#000"/></svg>
<span class="t" style="left:1291.4px;top:654.09px;font-size:11px;line-height:14px;color:#000;letter-spacing:0.277px;">Branch color</span>
<svg style="left:1281px;top:675.6px" width="5" height="8" viewBox="0 0 5 8"><path d="M0.3 0L4.4 4L0.3 8Z" fill="#000"/></svg>
<span class="t" style="left:1291.4px;top:672.79px;font-size:11px;line-height:14px;color:#000;letter-spacing:0.146px;">Metadata layers</span>
<svg style="left:1279px;top:704px" width="12" height="4" viewBox="0 0 12 4"><rect x="0.5" y="0.5" width="10" height="2" fill="#ededed" stroke="#7d7d7d" stroke-width="1"/></svg>
<svg style="left:1296px;top:701px" width="12" height="11" viewBox="0 0 12 11"><path d="M0.5 9.5V0.5H4.5L5.5 2.5H10.5V9.5Z" fill="#f4f4f4" stroke="#7d7d7d" stroke-width="1"/></svg>
<svg style="left:1314px;top:700px" width="11" height="12" viewBox="0 0 11 12"><path d="M0.5 3H7.5M5 0.8L7.5 3L5 5.2M0.5 5.5V9.5H7.5M5 7.3L7.5 9.5L5 11.7M9.3 0V12" stroke="#c6c6c6" stroke-width="1" fill="none"/></svg>
<div style="left:1382px;top:697px;width:58px;height:18px;" class="btn"></div>
<span class="t" style="left:1399.4px;top:699.69px;font-size:11px;line-height:14px;color:#000;letter-spacing:0.159px;">Help</span>
<div style="left:1452px;top:697px;width:118px;height:18px;" class="btn"></div>
<span class="t" style="left:1472.3px;top:699.69px;font-size:11px;line-height:14px;color:#000;letter-spacing:0.172px;">View Settings...</span>
<div style="left:1272px;top:58px;width:293px;height:179px;border:4px solid #e81a1a;"></div>
<div style="left:1276px;top:316px;width:108px;height:24px;border:4px solid #e81a1a;"></div>
<div style="left:1277px;top:414px;width:86px;height:26px;border:4px solid #e81a1a;"></div>
</body>
</html>
